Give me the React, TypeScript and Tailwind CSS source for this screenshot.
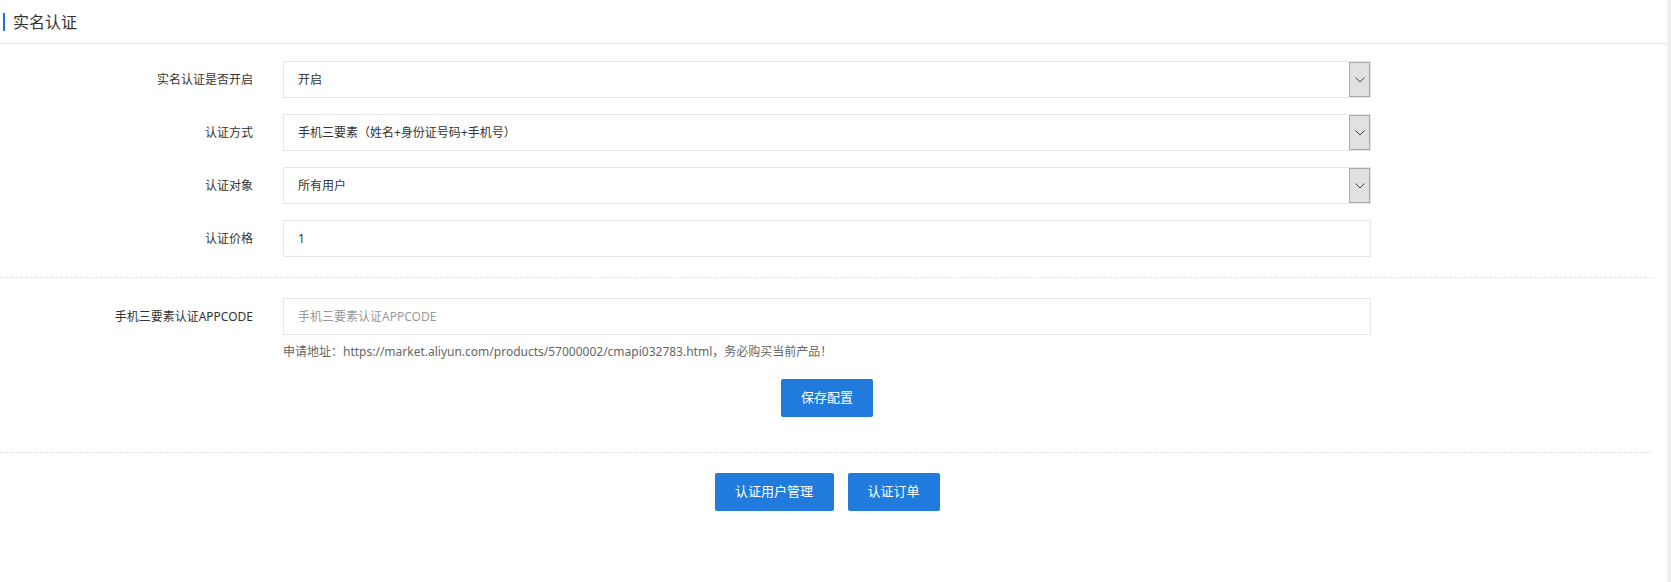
import React from "react";

const font = { fontFamily: '"Noto Sans", "Noto Sans CJK SC", sans-serif' };

function Chevron() {
  return (
    <svg width="10" height="6" viewBox="0 0 10 6" fill="none">
      <path d="M0.5 0.5 L5 5 L9.5 0.5" stroke="#444" strokeWidth="1" />
    </svg>
  );
}

function Row({ label, children }: { label: string; children: React.ReactNode }) {
  return (
    <div className="flex items-center">
      <div className="w-[253px] shrink-0 text-right text-[12px] text-[#333]">{label}</div>
      <div className="ml-[30px] w-[1088px]">{children}</div>
    </div>
  );
}

function SelectBox({ value }: { value: string }) {
  return (
    <div className="flex h-[37px] items-stretch border border-[#e6e6e6] bg-white">
      <div className="flex flex-1 items-center pl-[14px] text-[12px] text-[#333]">{value}</div>
      <div className="flex w-[21px] items-center justify-center border border-[#a9a9a9] bg-[#e1e1e1]">
        <Chevron />
      </div>
    </div>
  );
}

function InputBox({ value, placeholder }: { value?: string; placeholder?: string }) {
  return (
    <div className="flex h-[37px] items-center border border-[#e6e6e6] bg-white pl-[14px] text-[12px]">
      {value ? <span className="text-[#333]">{value}</span> : <span className="text-[#999]">{placeholder}</span>}
    </div>
  );
}

export default function App() {
  return (
    <div className="flex min-h-[582px] w-[1671px] bg-white" style={font}>
      <div className="w-[1667px]">
        <div className="flex h-[44px] items-center border-b border-[#e8e8e8] pl-[3px]">
          <div className="h-[18px] w-[2px] bg-[#1e6fd9]" />
          <div className="ml-[8px] text-[16px] text-[#333]">实名认证</div>
        </div>
        <div className="w-[1652px]">
          <div className="flex flex-col gap-[16px] pt-[17px]">
            <Row label="实名认证是否开启">
              <SelectBox value="开启" />
            </Row>
            <Row label="认证方式">
              <SelectBox value="手机三要素（姓名+身份证号码+手机号）" />
            </Row>
            <Row label="认证对象">
              <SelectBox value="所有用户" />
            </Row>
            <Row label="认证价格">
              <InputBox value="1" />
            </Row>
          </div>
          <div className="mt-[20px] border-t border-dashed border-[#e5e5e5]" />
          <div className="pt-[20px]">
            <Row label="手机三要素认证APPCODE">
              <InputBox placeholder="手机三要素认证APPCODE" />
            </Row>
            <div className="ml-[283px] mt-[8px] text-[12px] leading-[18px] text-[#666]">
              申请地址：https://market.aliyun.com/products/57000002/cmapi032783.html，务必购买当前产品！
            </div>
            <div className="ml-[283px] mt-[18px] flex w-[1088px] justify-center">
              <button className="h-[38px] w-[92px] rounded-[2px] bg-[#217bdc] text-[13px] text-white">保存配置</button>
            </div>
          </div>
          <div className="mt-[35px] border-t border-dashed border-[#e5e5e5]" />
          <div className="ml-[283px] mt-[20px] flex w-[1088px] justify-center gap-[14px]">
            <button className="h-[38px] w-[119px] rounded-[2px] bg-[#217bdc] text-[13px] text-white">认证用户管理</button>
            <button className="h-[38px] w-[92px] rounded-[2px] bg-[#217bdc] text-[13px] text-white">认证订单</button>
          </div>
        </div>
      </div>
      <div className="w-[4px] bg-[#efefef]" />
    </div>
  );
}
